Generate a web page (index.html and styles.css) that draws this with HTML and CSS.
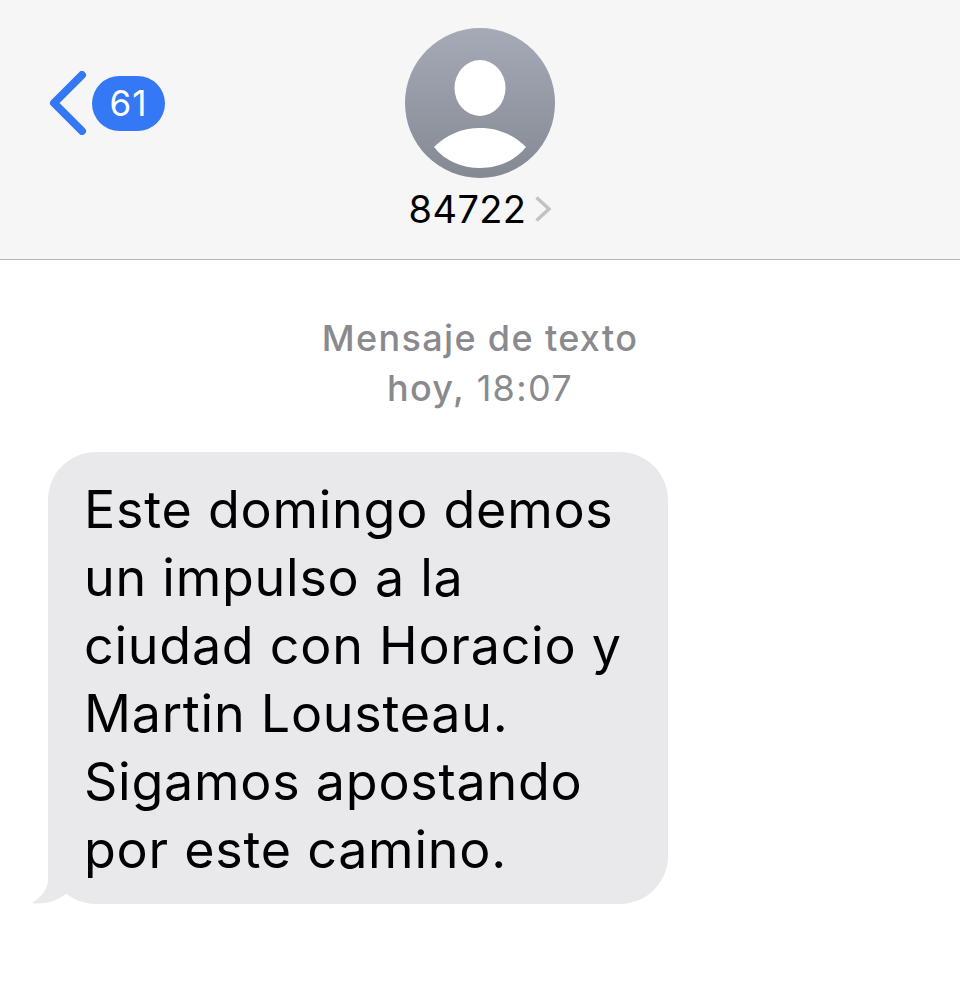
FILE: index.html
```html
<!DOCTYPE html>
<html lang="es">
<head>
    <meta charset="UTF-8">
    <meta name="viewport" content="width=device-width, initial-scale=1.0">
    <title>Mensajes</title>
    <link rel="stylesheet" href="styles.css">
</head>
<body>

<header class="navBar">
    <a class="backLink">
        <svg class="backChevron" width="40" height="64" viewBox="0 0 40 64">
            <polyline points="33,4 5,32 33,60" fill="none" stroke="#3478f6" stroke-width="8" stroke-linecap="round" stroke-linejoin="round"/>
        </svg>
        <span class="badge">61</span>
    </a>

    <div class="contact">
        <svg class="avatar" width="150" height="150" viewBox="0 0 150 150">
            <defs>
                <linearGradient id="avatarFill" x1="0" y1="0" x2="0" y2="1">
                    <stop offset="0" stop-color="#a6aab6"/>
                    <stop offset="1" stop-color="#858994"/>
                </linearGradient>
            </defs>
            <circle cx="75" cy="75" r="75" fill="url(#avatarFill)"/>
            <ellipse cx="75" cy="60" rx="25.5" ry="28" fill="#fff"/>
            <path d="M29 119 C41 107 57 100 75 100 C93 100 109 107 121 119 C110 133 93 140 75 140 C57 140 40 133 29 119 Z" fill="#fff"/>
        </svg>
        <div class="contactName">
            <span>84722</span>
            <svg class="nameChevron" width="16" height="26" viewBox="0 0 16 26">
                <polyline points="1.5,1.5 14,13 1.5,24.5" fill="none" stroke="#c2c2c4" stroke-width="3.5"/>
            </svg>
        </div>
    </div>
</header>

<main class="thread">
    <div class="meta">
        <div class="metaType">Mensaje de texto</div>
        <div><span class="metaDay">hoy,</span> 18:07</div>
    </div>

    <div class="bubble">
        <svg class="bubbleTail" width="50" height="50" viewBox="0 0 50 50">
            <path d="M16 0 L16 25 C16 33 10 42 0 48 C13 50 25 46 35 38 L50 30 L50 0 Z" fill="#e9e9eb"/>
        </svg>
        Este domingo demos<br>
        un impulso a la<br>
        ciudad con Horacio y<br>
        Martin Lousteau.<br>
        Sigamos apostando<br>
        por este camino.
    </div>
</main>

</body>
</html>
```

FILE: styles.css
```css
body {
    margin: 0;
    background-color: #fff;
    font-family: 'Inter', 'Liberation Sans', sans-serif;
    color: #000;
}

.navBar {
    display: grid;
    grid-template-columns: 1fr auto 1fr;
    height: 260px;
    padding-top: 28px;
    box-sizing: border-box;
    background-color: #f6f6f6;
    border-bottom: 1px solid #b5b5b7;
}

.backLink {
    display: flex;
    align-items: center;
    align-self: start;
    margin-top: 43px;
    padding-left: 49px;
}

.backChevron {
    margin-right: 3px;
}

.badge {
    width: 73px;
    height: 55px;
    line-height: 55px;
    border-radius: 28px;
    background-color: #3478f6;
    color: #fff;
    font-size: 35px;
    letter-spacing: 1px;
    text-align: center;
}

.contact {
    display: flex;
    flex-direction: column;
    align-items: center;
}

.avatar {
    display: block;
}

.contactName {
    display: flex;
    align-items: center;
    gap: 9px;
    margin-top: 9px;
    font-size: 38px;
    letter-spacing: 0.4px;
    line-height: 44px;
}

.thread {
    padding: 53px 48px 0;
}

.meta {
    color: #8a8a8e;
    font-size: 36px;
    letter-spacing: 1.35px;
    line-height: 50px;
    text-align: center;
}

.metaType, .metaDay {
    font-weight: 500;
}

.bubble {
    position: relative;
    width: 620px;
    margin-top: 39px;
    padding: 24px 0 20px 36px;
    box-sizing: border-box;
    border-radius: 48px;
    background-color: #e9e9eb;
    font-size: 52px;
    letter-spacing: 0.75px;
    line-height: 68px;
}

.bubbleTail {
    position: absolute;
    left: -16px;
    bottom: -1px;
}
```
